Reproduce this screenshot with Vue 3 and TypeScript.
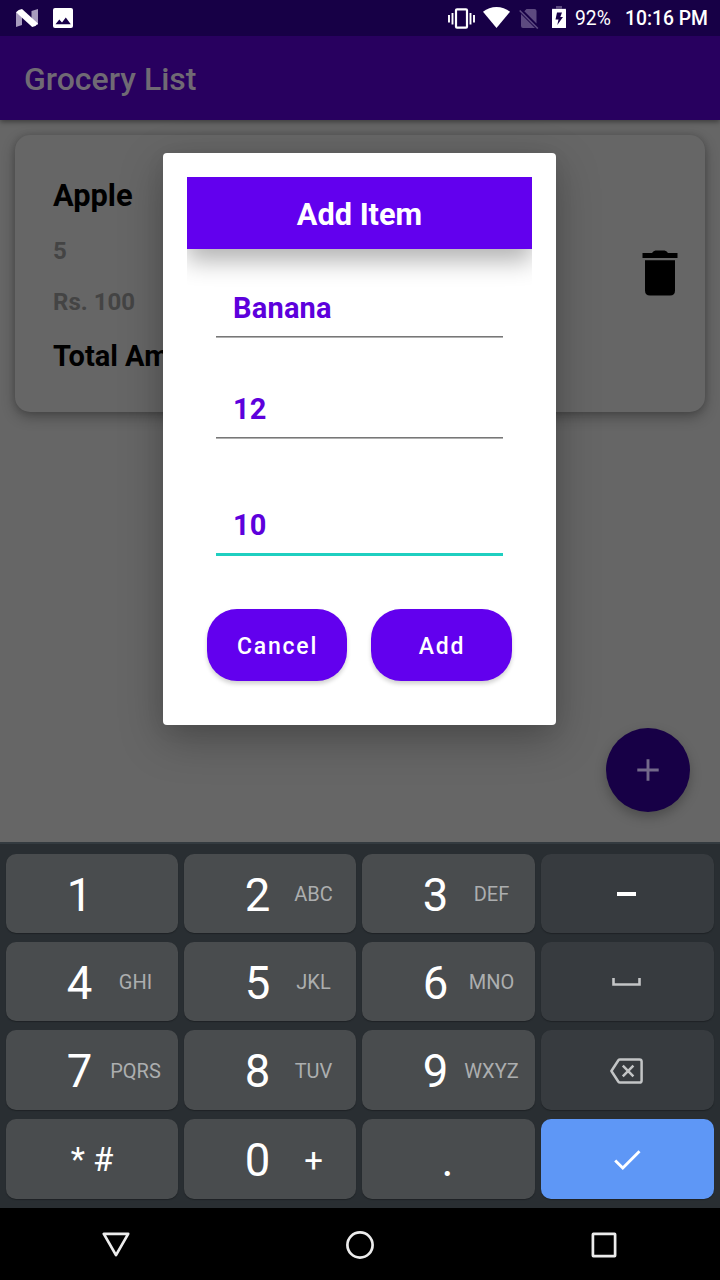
<script setup lang="ts">
import { ref } from 'vue'

interface Key {
  digit: string
  letters?: string
  kind?: 'symbols' | 'zero' | 'dot' | 'minus' | 'space' | 'delete' | 'done'
}

const name = ref('Banana')
const quantity = ref('12')
const price = ref('10')

const keys: Key[] = [
  { digit: '1' },
  { digit: '2', letters: 'ABC' },
  { digit: '3', letters: 'DEF' },
  { digit: '', kind: 'minus' },
  { digit: '4', letters: 'GHI' },
  { digit: '5', letters: 'JKL' },
  { digit: '6', letters: 'MNO' },
  { digit: '', kind: 'space' },
  { digit: '7', letters: 'PQRS' },
  { digit: '8', letters: 'TUV' },
  { digit: '9', letters: 'WXYZ' },
  { digit: '', kind: 'delete' },
  { digit: '* #', kind: 'symbols' },
  { digit: '0', letters: '+', kind: 'zero' },
  { digit: '.', kind: 'dot' },
  { digit: '', kind: 'done' },
]
</script>

<template>
  <div class="screen">
    <header class="status">
      <svg class="i-n" width="22" height="18" viewBox="0 0 22 18">
        <path d="M0 3 6 7.500V16L0 18ZM15.500 2 22 0V16L15.500 11Z" fill="#a79bbd" />
        <path d="M0 3.200Q2.500 .2 6 0L22 14.500Q20 17.500 16.200 18Z" fill="#fff" />
      </svg>
      <svg class="i-pic" width="20" height="20" viewBox="0 0 20 20">
        <rect width="20" height="20" rx="2" fill="#fff" />
        <path d="M2.500 16.300 6.300 11.500 9 14.500 12.800 9.500 17.800 16.300Z" fill="#180048" />
      </svg>
      <span class="grow"></span>
      <svg class="i-vib" width="27" height="21" viewBox="0 0 27 21">
        <rect x="8" y="1.300" width="11" height="18.400" rx="1" fill="none" stroke="#fff" stroke-width="2.200" />
        <path d="M1 7V14.500M4.500 5V16.500M22.500 5V16.500M26 7V14.500" stroke="#fff" stroke-width="1.900" />
      </svg>
      <svg class="i-wifi" width="27" height="21" viewBox="0 0 27 21">
        <path d="M0 4.800C7.500-1.500 19.500-1.500 27 4.800L13.500 21Z" fill="#fff" />
      </svg>
      <svg class="i-sim" width="20" height="21" viewBox="0 0 20 21">
        <path d="M7.500 1H15.500Q17.500 1 17.500 3V15.500L5.300 3.200ZM2 6 16 20H4Q2 20 2 18Z" fill="#5d4a80" />
        <path d="M.7 2.500 18.800 20.500" stroke="#5d4a80" stroke-width="1.600" />
      </svg>
      <svg class="i-bat" width="14" height="22" viewBox="0 0 14 22">
        <path d="M4 0H10V2.500H14V5H0V2.500H4Z" fill="#5d4a80" />
        <rect y="3" width="14" height="19" rx=".6" fill="#fff" />
        <path d="M5 6.500H10L8.300 11H11L5.300 19 6.500 13.500H3.500Z" fill="#180048" />
      </svg>
      <span class="percent">92%</span>
      <span class="time">10:16 PM</span>
    </header>

    <main class="app">
      <div class="appbar"><h1>Grocery List</h1></div>
      <section class="card">
        <div class="lines">
          <div class="strong">Apple</div>
          <div class="muted">5</div>
          <div class="muted">Rs. 100</div>
          <div class="strong total">Total Amount</div>
        </div>
        <svg width="36" height="46" viewBox="0 0 36 46">
          <path d="M.5 3H10Q11.500 .4 13.500 .4H22.500Q24.500 .4 26 3H35.500V8H.5ZM3 10.300H33V40.500Q33 45.600 28 45.600H8Q3 45.600 3 40.500Z" fill="#000" />
        </svg>
      </section>
      <div class="fab">
        <svg width="22" height="22" viewBox="0 0 22 22">
          <path d="M11 .3V21.700M.3 11H21.700" stroke="#73698a" stroke-width="2.900" />
        </svg>
      </div>

      <div class="layer">
        <div class="dialog">
          <div class="head-wrap"><h2>Add Item</h2></div>
          <div class="fields">
            <input v-model="name" class="field" />
            <input v-model="quantity" class="field" />
            <input v-model="price" class="field active" />
          </div>
          <div class="actions">
            <button type="button" class="cancel">Cancel</button>
            <button type="button" class="add">Add</button>
          </div>
        </div>
      </div>
    </main>

    <section class="keyboard">
      <div v-for="(k, i) in keys" :key="i" class="key" :class="k.kind">
        <svg v-if="k.kind === 'minus'" width="19" height="4"><rect width="19" height="4" fill="#fff" /></svg>
        <svg v-else-if="k.kind === 'space'" width="29" height="8" viewBox="0 0 29 8">
          <path d="M1.500 0V6.500H27.500V0" fill="none" stroke="#c3c5c6" stroke-width="2.600" />
        </svg>
        <svg v-else-if="k.kind === 'delete'" width="33" height="26" viewBox="0 0 33 26">
          <g fill="none" stroke="#c3c5c6" stroke-width="2.500" stroke-linejoin="round">
            <path d="M10 1.400H29.500Q31.600 1.400 31.600 3.500V22.500Q31.600 24.600 29.500 24.600H10Q9 24.600 8.400 23.700L1.400 13 8.400 2.300Q9 1.400 10 1.400Z" />
            <path d="M12.800 7.700 23.400 18.300M23.400 7.700 12.800 18.300" />
          </g>
        </svg>
        <svg v-else-if="k.kind === 'done'" width="27" height="20" viewBox="0 0 27 20">
          <path d="M1.200 10.500 8.800 18 25.500 1.300" fill="none" stroke="#fff" stroke-width="2.900" />
        </svg>
        <template v-else>
          <span class="digit">{{ k.digit }}</span>
          <span v-if="k.letters" class="letters">{{ k.letters }}</span>
        </template>
      </div>
    </section>

    <nav class="nav">
      <svg width="28" height="28" viewBox="0 0 28 28">
        <path d="M1.800 2.800H26.200L14 24.200Z" fill="none" stroke="#ececec" stroke-width="2.700" stroke-linejoin="round" />
      </svg>
      <svg width="28" height="28" viewBox="0 0 28 28">
        <circle cx="14" cy="14" r="12.600" fill="none" stroke="#ececec" stroke-width="2.700" />
      </svg>
      <svg width="28" height="28" viewBox="0 0 28 28">
        <rect x="2.900" y="2.900" width="22.200" height="22.200" rx=".5" fill="none" stroke="#ececec" stroke-width="2.700" />
      </svg>
    </nav>
  </div>
</template>

<style>
body {
  margin: 0;
  background: #000;
}
</style>

<style scoped>
.screen {
  width: 720px;
  height: 1280px;
  display: flex;
  flex-direction: column;
  overflow: hidden;
  font-family: Roboto, "Liberation Sans", sans-serif;
}
svg {
  display: block;
  flex: none;
}
.status {
  height: 36px;
  box-sizing: border-box;
  padding: 0 12px 0 16px;
  background: #170046;
  color: #fff;
  display: flex;
  align-items: center;
  font-size: 19px;
  flex: none;
}
.grow { flex: 1; }
.i-pic { margin-left: 15px; }
.i-wifi { margin-left: 8px; margin-bottom: 1px; }
.i-sim { margin-left: 9px; }
.i-bat { margin-left: 13px; margin-bottom: 2px; }
.percent {
  width: 50px;
  margin-left: 9px;
  padding-top: 1px;
  font-size: 19.300px;
}
.time {
  width: 83px;
  padding-top: 1px;
  font-weight: 500;
  font-size: 19.300px;
  white-space: nowrap;
}
.app {
  height: 806px;
  flex: none;
  position: relative;
  background: #666;
  overflow: hidden;
}
.appbar {
  height: 84px;
  box-sizing: border-box;
  padding: 2px 24px 0;
  display: flex;
  align-items: center;
  background: #28005f;
  box-shadow: 0 2px 5px rgba(0, 0, 0, 0.4);
}
h1 {
  margin: 0;
  color: #706a74;
  font-size: 32px;
  line-height: 38px;
  font-weight: 500;
}
.card {
  height: 277px;
  margin: 15px 15px 0;
  box-sizing: border-box;
  padding: 5px 27px 0 38px;
  border-radius: 15px;
  background: #666;
  box-shadow: 0 5px 14px rgba(0, 0, 0, 0.3), 0 0 6px rgba(0, 0, 0, 0.14);
  display: flex;
  align-items: center;
  justify-content: space-between;
}
.card svg { margin-bottom: 6px; }
.lines {
  display: grid;
  grid-template-rows: 36px 29px 29px 36px;
  gap: 22px;
  align-items: center;
  font-weight: 700;
}
.strong {
  font-size: 30.800px;
  line-height: 36px;
  color: #000;
}
.total {
  font-size: 29px;
}
.muted {
  font-size: 24px;
  color: #444;
}
.fab {
  position: absolute;
  right: 30px;
  bottom: 30px;
  width: 84px;
  height: 84px;
  border-radius: 50%;
  background: #170046;
  display: flex;
  align-items: center;
  justify-content: center;
  box-shadow: 0 5px 12px rgba(0, 0, 0, 0.26);
}
.layer {
  position: absolute;
  inset: 0 1px 0 0;
  display: flex;
  align-items: center;
  justify-content: center;
}
.dialog {
  width: 393px;
  height: 572px;
  box-sizing: border-box;
  padding: 24px;
  border-radius: 4px;
  background: #fff;
  box-shadow: 0 14px 44px rgba(0, 0, 0, 0.27), 0 4px 20px rgba(0, 0, 0, 0.06);
}
.head-wrap {
  height: 110px;
  margin-bottom: -38px;
  overflow: hidden;
}
h2 {
  margin: 0;
  height: 72px;
  line-height: 75px;
  background: #6200ee;
  color: #fff;
  text-align: center;
  font-size: 30.700px;
  font-weight: 700;
  box-shadow: 0 12px 24px rgba(0, 0, 0, 0.3);
}
.fields {
  padding: 30px 29px 0;
  display: flex;
  flex-direction: column;
}
.field {
  height: 59px;
  box-sizing: border-box;
  border: 0;
  border-bottom: 1px solid #b0b0b0;
  box-shadow: inset 0 -1px #777;
  padding: 0 17px;
  border-radius: 0;
  outline: none;
  background: transparent;
  color: #5d00dc;
  font: 700 29px Roboto, sans-serif;
  letter-spacing: 0.200px;
}
.field + .field { margin-top: 42px; }
.field + .active {
  margin-top: 57px;
  height: 60px;
  padding-top: 1px;
  border-bottom: 3px solid #1fcfc0;
  box-shadow: none;
}
.actions {
  display: flex;
  gap: 24px;
  padding: 53px 20px 0;
}
button {
  height: 72px;
  padding: 2px 0 0 1px;
  border: 0;
  border-radius: 30px;
  background: #6200ee;
  color: #fff;
  font: 500 23px Roboto, sans-serif;
  letter-spacing: 1.800px;
  box-shadow: 0 3px 4px rgba(0, 0, 0, 0.18);
}
.cancel { width: 140px; }
.add { width: 141px; }
.keyboard {
  height: 366px;
  flex: none;
  box-sizing: border-box;
  padding: 10px 6px 9px;
  border-top: 2px solid #343b40;
  background: #292e32;
  display: grid;
  grid-template-columns: 172px 172px 173px 173px;
  grid-template-rows: 79px 79px 80px 80px;
  gap: 9px 6px;
}
.key {
  border-radius: 10px;
  background: #494c4e;
  box-shadow: 0 1px 1px #1e2225;
  display: grid;
  grid-template-columns: 57px 55px;
  padding-left: 45px;
  align-items: center;
  justify-items: center;
  color: #fff;
}
.digit {
  font-size: 45.500px;
  line-height: 54px;
  padding: 4px 0 0;
}
.letters {
  font-size: 20px;
  color: #acaeaf;
  padding-top: 1px;
}
.minus,
.space,
.delete,
.done,
.symbols,
.dot {
  display: flex;
  justify-content: center;
  padding: 0;
}
.minus,
.space,
.delete { background: #373b3f; }
.minus,
.space,
.delete,
.dot { padding-right: 2px; }
.delete svg { padding-top: 2px; }
.done svg { padding-top: 1px; }
.done { background: #5e97f6; }
.symbols .digit {
  font-size: 33px;
  padding: 2px 0 0;
}
.zero .letters {
  font-size: 33px;
  padding-top: 3px;
  color: #fff;
}
.nav {
  height: 72px;
  flex: none;
  padding-top: 1px;
  box-sizing: border-box;
  background: #000;
  display: flex;
  align-items: center;
  justify-content: center;
  gap: 216px;
}
</style>
